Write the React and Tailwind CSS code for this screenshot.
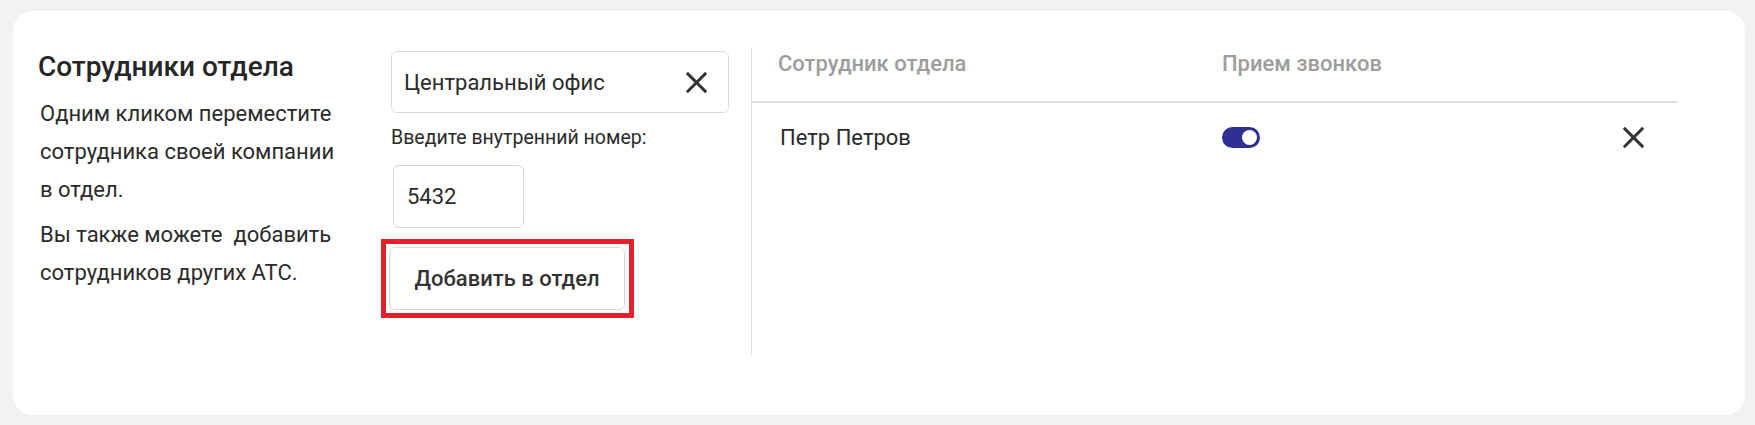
function XIcon({ className }) {
  return (
    <svg viewBox="0 0 24 24" className={className} fill="none" stroke="currentColor" strokeWidth="3" strokeLinecap="square">
      <path d="M3 3L21 21M21 3L3 21" />
    </svg>
  );
}

export default function App() {
  return (
    <div className="min-h-screen bg-[#f1f2f1] pt-[11px] pl-[13px] pr-[10px] pb-[10px] font-['Roboto',sans-serif] text-[#2b2b2b]">
      <div className="bg-white rounded-[20px] h-[404px] flex pl-[25px]">
        {/* Описание */}
        <div className="w-[353px] pt-[40px]">
          <h2 className="text-[28px] leading-[32px] font-medium text-[#262626]">Сотрудники отдела</h2>
          <p className="mt-[12px] pl-[2px] text-[22px] leading-[38px]">
            Одним кликом переместите<br />
            сотрудника своей компании<br />
            в отдел.
          </p>
          <p className="mt-[7px] pl-[2px] text-[22px] leading-[38px]">
            Вы также можете{'\u00a0'} добавить<br />
            сотрудников других АТС.
          </p>
        </div>

        {/* Форма */}
        <div className="w-[338px] pt-[40px]">
          <div className="h-[62px] border border-[#d9d9d9] rounded-[6px] flex items-center justify-between pl-[12px] pr-[20px]">
            <span className="text-[22px]">Центральный офис</span>
            <XIcon className="w-[23px] h-[23px] text-[#333]" />
          </div>
          <div className="mt-[12px] text-[19.5px] leading-[26px]">Введите внутренний номер:</div>
          <div className="mt-[14px] ml-[2px] w-[131px] h-[63px] border border-[#d9d9d9] rounded-[6px] flex items-center pl-[13px] text-[22px]">
            5432
          </div>
          <div className="mt-[11px] -ml-[10px] w-[253px] border-[5px] border-[#e5202a] p-[3px]">
            <button className="w-[236px] h-[63px] border border-[#d9d9d9] rounded-[6px] bg-white text-[22px] font-medium text-[#333]">
              Добавить в отдел
            </button>
          </div>
        </div>

        {/* Таблица */}
        <div className="ml-[22px] mt-[37px] h-[307px] w-[926px] border-l border-[#dedede]">
          <div className="h-[55px] border-b-2 border-[#e0e0e0] flex pt-[3px] pl-[26px] text-[22px] leading-[26px] font-medium text-[#9d9d9d]">
            <div className="w-[444px]">Сотрудник отдела</div>
            <div>Прием звонков</div>
          </div>
          <div className="h-[68px] flex items-center pl-[28px] pr-[32px]">
            <div className="w-[442px] text-[22px]">Петр Петров</div>
            <div className="flex-1">
              <div className="w-[38px] h-[21px] rounded-full bg-[#2e3192] flex items-center justify-end pr-[3px]">
                <div className="w-[15px] h-[15px] rounded-full bg-white" />
              </div>
            </div>
            <XIcon className="w-[23px] h-[23px] text-[#333]" />
          </div>
        </div>
      </div>
    </div>
  );
}
